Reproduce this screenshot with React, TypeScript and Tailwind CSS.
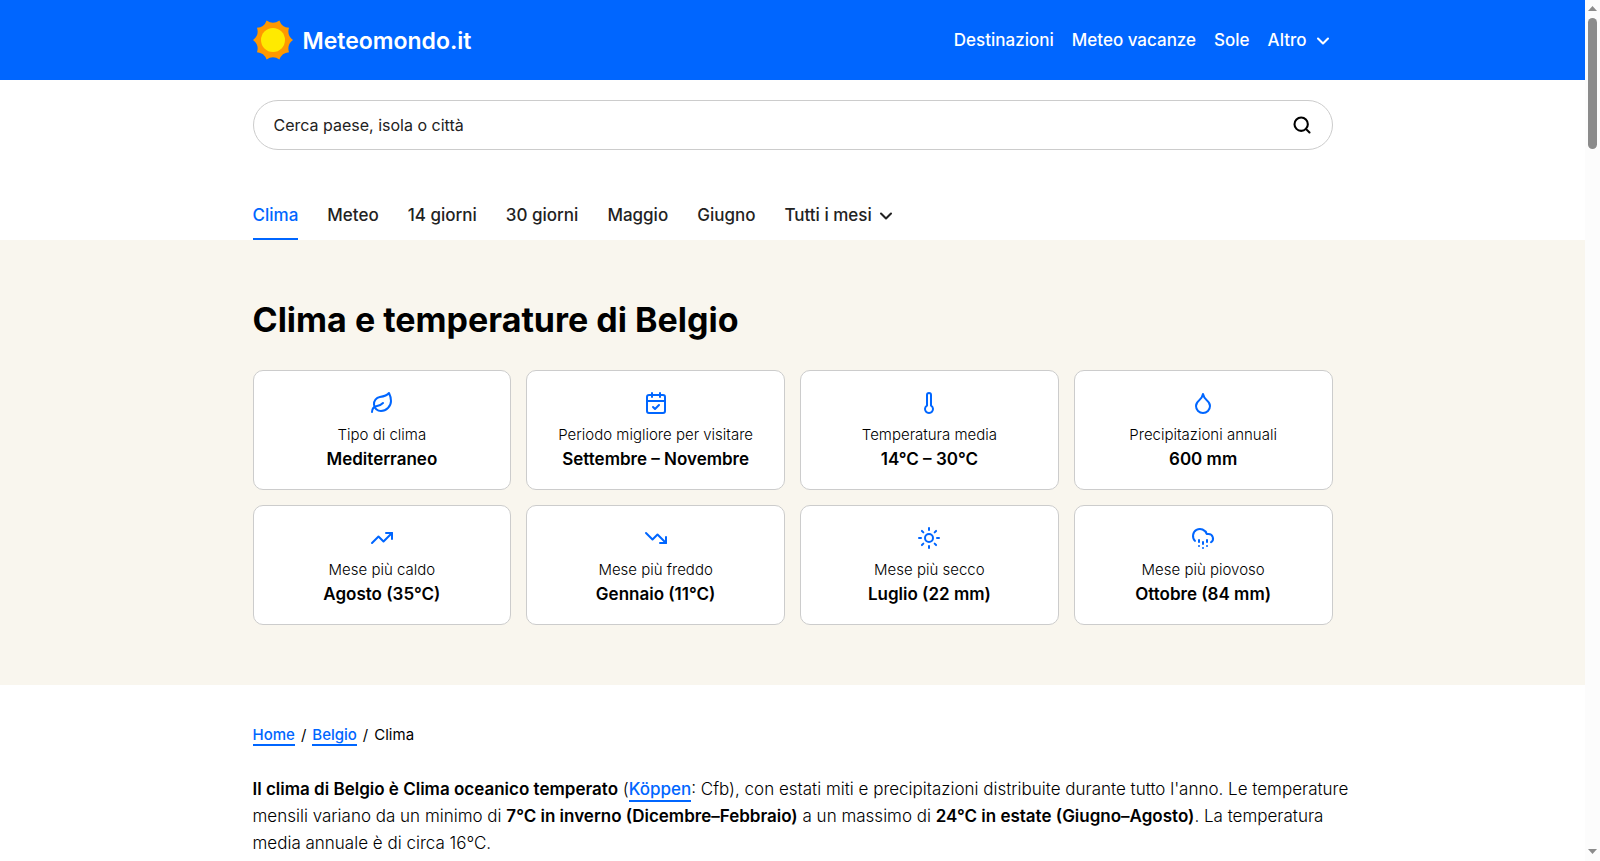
import type { ReactNode } from "react";
import {
  CalendarCheck,
  ChevronDown,
  CloudHail,
  Droplet,
  Leaf,
  Search,
  Sun,
  Thermometer,
  TrendingDown,
  TrendingUp,
} from "lucide-react";

const navLinks = ["Destinazioni", "Meteo vacanze", "Sole"];

const tabs = ["Clima", "Meteo", "14 giorni", "30 giorni", "Maggio", "Giugno"];

const facts = [
  { icon: Leaf, label: "Tipo di clima", value: "Mediterraneo" },
  {
    icon: CalendarCheck,
    label: "Periodo migliore per visitare",
    value: "Settembre – Novembre",
  },
  { icon: Thermometer, label: "Temperatura media", value: "14°C – 30°C" },
  { icon: Droplet, label: "Precipitazioni annuali", value: "600 mm" },
  { icon: TrendingUp, label: "Mese più caldo", value: "Agosto (35°C)" },
  { icon: TrendingDown, label: "Mese più freddo", value: "Gennaio (11°C)" },
  { icon: Sun, label: "Mese più secco", value: "Luglio (22 mm)" },
  { icon: CloudHail, label: "Mese più piovoso", value: "Ottobre (84 mm)" },
];

const Container = ({ children }: { children: ReactNode }) => (
  <div className="mx-auto w-full max-w-[1080px]">{children}</div>
);

const Logo = () => (
  <svg viewBox="0 0 40 40" className="size-10" aria-hidden="true">
    <path
      fill="#ff9800"
      d="M13.6 0.4A11 11 0 0 0 26.4 0.4A11 11 0 0 0 36 7.800A11 11 0 0 0 40 20A11 11 0 0 0 36 32.200A11 11 0 0 0 26.4 39.600A11 11 0 0 0 13.6 39.600A11 11 0 0 0 4 32.200A11 11 0 0 0 0 20A11 11 0 0 0 4 7.800A11 11 0 0 0 13.6 0.4Z"
    />
    <circle cx="20" cy="20" r="12" fill="#ffea00" />
  </svg>
);

const Header = () => (
  <header className="bg-[#0066ff] text-white">
    <Container>
      <div className="flex h-20 items-center justify-between">
        <a
          href="#"
          className="flex items-center gap-2.5 text-[23px] font-semibold"
        >
          <Logo />
          <span className="pt-0.5">Meteomondo.it</span>
        </a>
        <nav className="flex items-center gap-[18px] pt-0.5 text-[17px] font-medium">
          {navLinks.map((link) => (
            <a href="#" key={link}>
              {link}
            </a>
          ))}
          <button type="button" className="flex items-center gap-1.5">
            Altro
            <ChevronDown className="size-5" strokeWidth={2.5} />
          </button>
        </nav>
      </div>
    </Container>
  </header>
);

const SearchBar = () => (
  <form className="mt-5 flex h-[50px] items-center rounded-full border border-[#cccccc] px-5">
    <input
      type="text"
      aria-label="Cerca paese, isola o città"
      placeholder="Cerca paese, isola o città"
      className="flex-1 text-base text-[#222222] outline-none placeholder:text-[#222222]"
    />
    <button type="submit" aria-label="Cerca">
      <Search className="size-5 text-black" strokeWidth={2.5} />
    </button>
  </form>
);

const Tabs = () => (
  <nav className="mt-10 flex h-[50px] gap-[29px] text-[17px] font-medium text-[#222222]">
    {tabs.map((tab, index) => (
      <a
        href="#"
        key={tab}
        className={`flex items-center border-b-2 pt-1 ${
          index === 0 ? "border-[#0066ff] text-[#0066ff]" : "border-transparent"
        }`}
      >
        {tab}
      </a>
    ))}
    <button
      type="button"
      className="flex items-center gap-1 border-b-2 border-transparent pt-1"
    >
      Tutti i mesi
      <ChevronDown className="size-5" strokeWidth={2.5} />
    </button>
  </nav>
);

const Facts = () => (
  <section className="bg-[#f9f6ee] py-15">
    <Container>
      <h1 className="text-[34px] leading-10 font-bold">
        Clima e temperature di Belgio
      </h1>
      <ul className="mt-[30px] grid grid-cols-4 gap-[15px]">
        {facts.map(({ icon: Icon, label, value }) => (
          <li
            key={label}
            className="flex flex-col items-center rounded-[10px] border border-[#cccccc] bg-white pt-5 pb-[18px] text-center"
          >
            <Icon className="mb-2 size-6 text-[#0066ff]" />
            <span className="text-[15px] leading-6 font-light">{label}</span>
            <strong className="text-[17px] leading-6 font-semibold">
              {value}
            </strong>
          </li>
        ))}
      </ul>
    </Container>
  </section>
);

const Breadcrumb = () => (
  <nav className="mt-10 flex gap-1.5 text-[15px] leading-[19px]">
    <a href="#" className="border-b-2 border-[#0066ff] font-medium text-[#0066ff]">
      Home
    </a>
    <span>/</span>
    <a href="#" className="border-b-2 border-[#0066ff] font-medium text-[#0066ff]">
      Belgio
    </a>
    <span>/</span>
    <span>Clima</span>
  </nav>
);

const Intro = () => (
  <p className="-mr-5 mt-[30px] text-[17px] leading-[27px] font-light">
    <strong className="font-semibold">
      Il clima di Belgio è Clima oceanico temperato
    </strong>{" "}
    (
    <a
      href="#"
      className="border-b-2 border-[#0066ff] pb-px font-medium text-[#0066ff]"
    >
      Köppen
    </a>
    : Cfb), con estati miti e precipitazioni distribuite durante tutto l'anno.
    Le temperature mensili variano da un minimo di{" "}
    <strong className="font-semibold">
      7°C in inverno (Dicembre–Febbraio)
    </strong>{" "}
    a un massimo di{" "}
    <strong className="font-semibold">24°C in estate (Giugno–Agosto)</strong>. La
    temperatura media annuale è di circa 16°C.
  </p>
);

const ScrollRail = () => (
  <div
    className="sticky top-0 flex h-screen w-[15px] shrink-0 flex-col items-center bg-[#fcfcfc] text-[#8b8b8b]"
    aria-hidden="true"
  >
    <svg viewBox="0 0 9 5" className="mt-1.5 h-[5px] w-[9px]" fill="currentColor">
      <path d="M4.500 0 9 5H0Z" />
    </svg>
    <div className="mt-[7px] h-[131px] w-[9px] rounded-full bg-[#8b8b8b]" />
    <svg
      viewBox="0 0 9 5"
      className="mt-auto mb-[7px] h-[5px] w-[9px]"
      fill="currentColor"
    >
      <path d="M0 0H9L4.500 5Z" />
    </svg>
  </div>
);

const App = () => {
  return (
    <div className="flex bg-white font-['Inter',sans-serif] text-black">
      <div className="min-w-0 flex-1">
        <Header />
        <Container>
          <SearchBar />
          <Tabs />
        </Container>
        <Facts />
        <Container>
          <Breadcrumb />
          <Intro />
        </Container>
      </div>
      <ScrollRail />
    </div>
  );
};

export default App;
